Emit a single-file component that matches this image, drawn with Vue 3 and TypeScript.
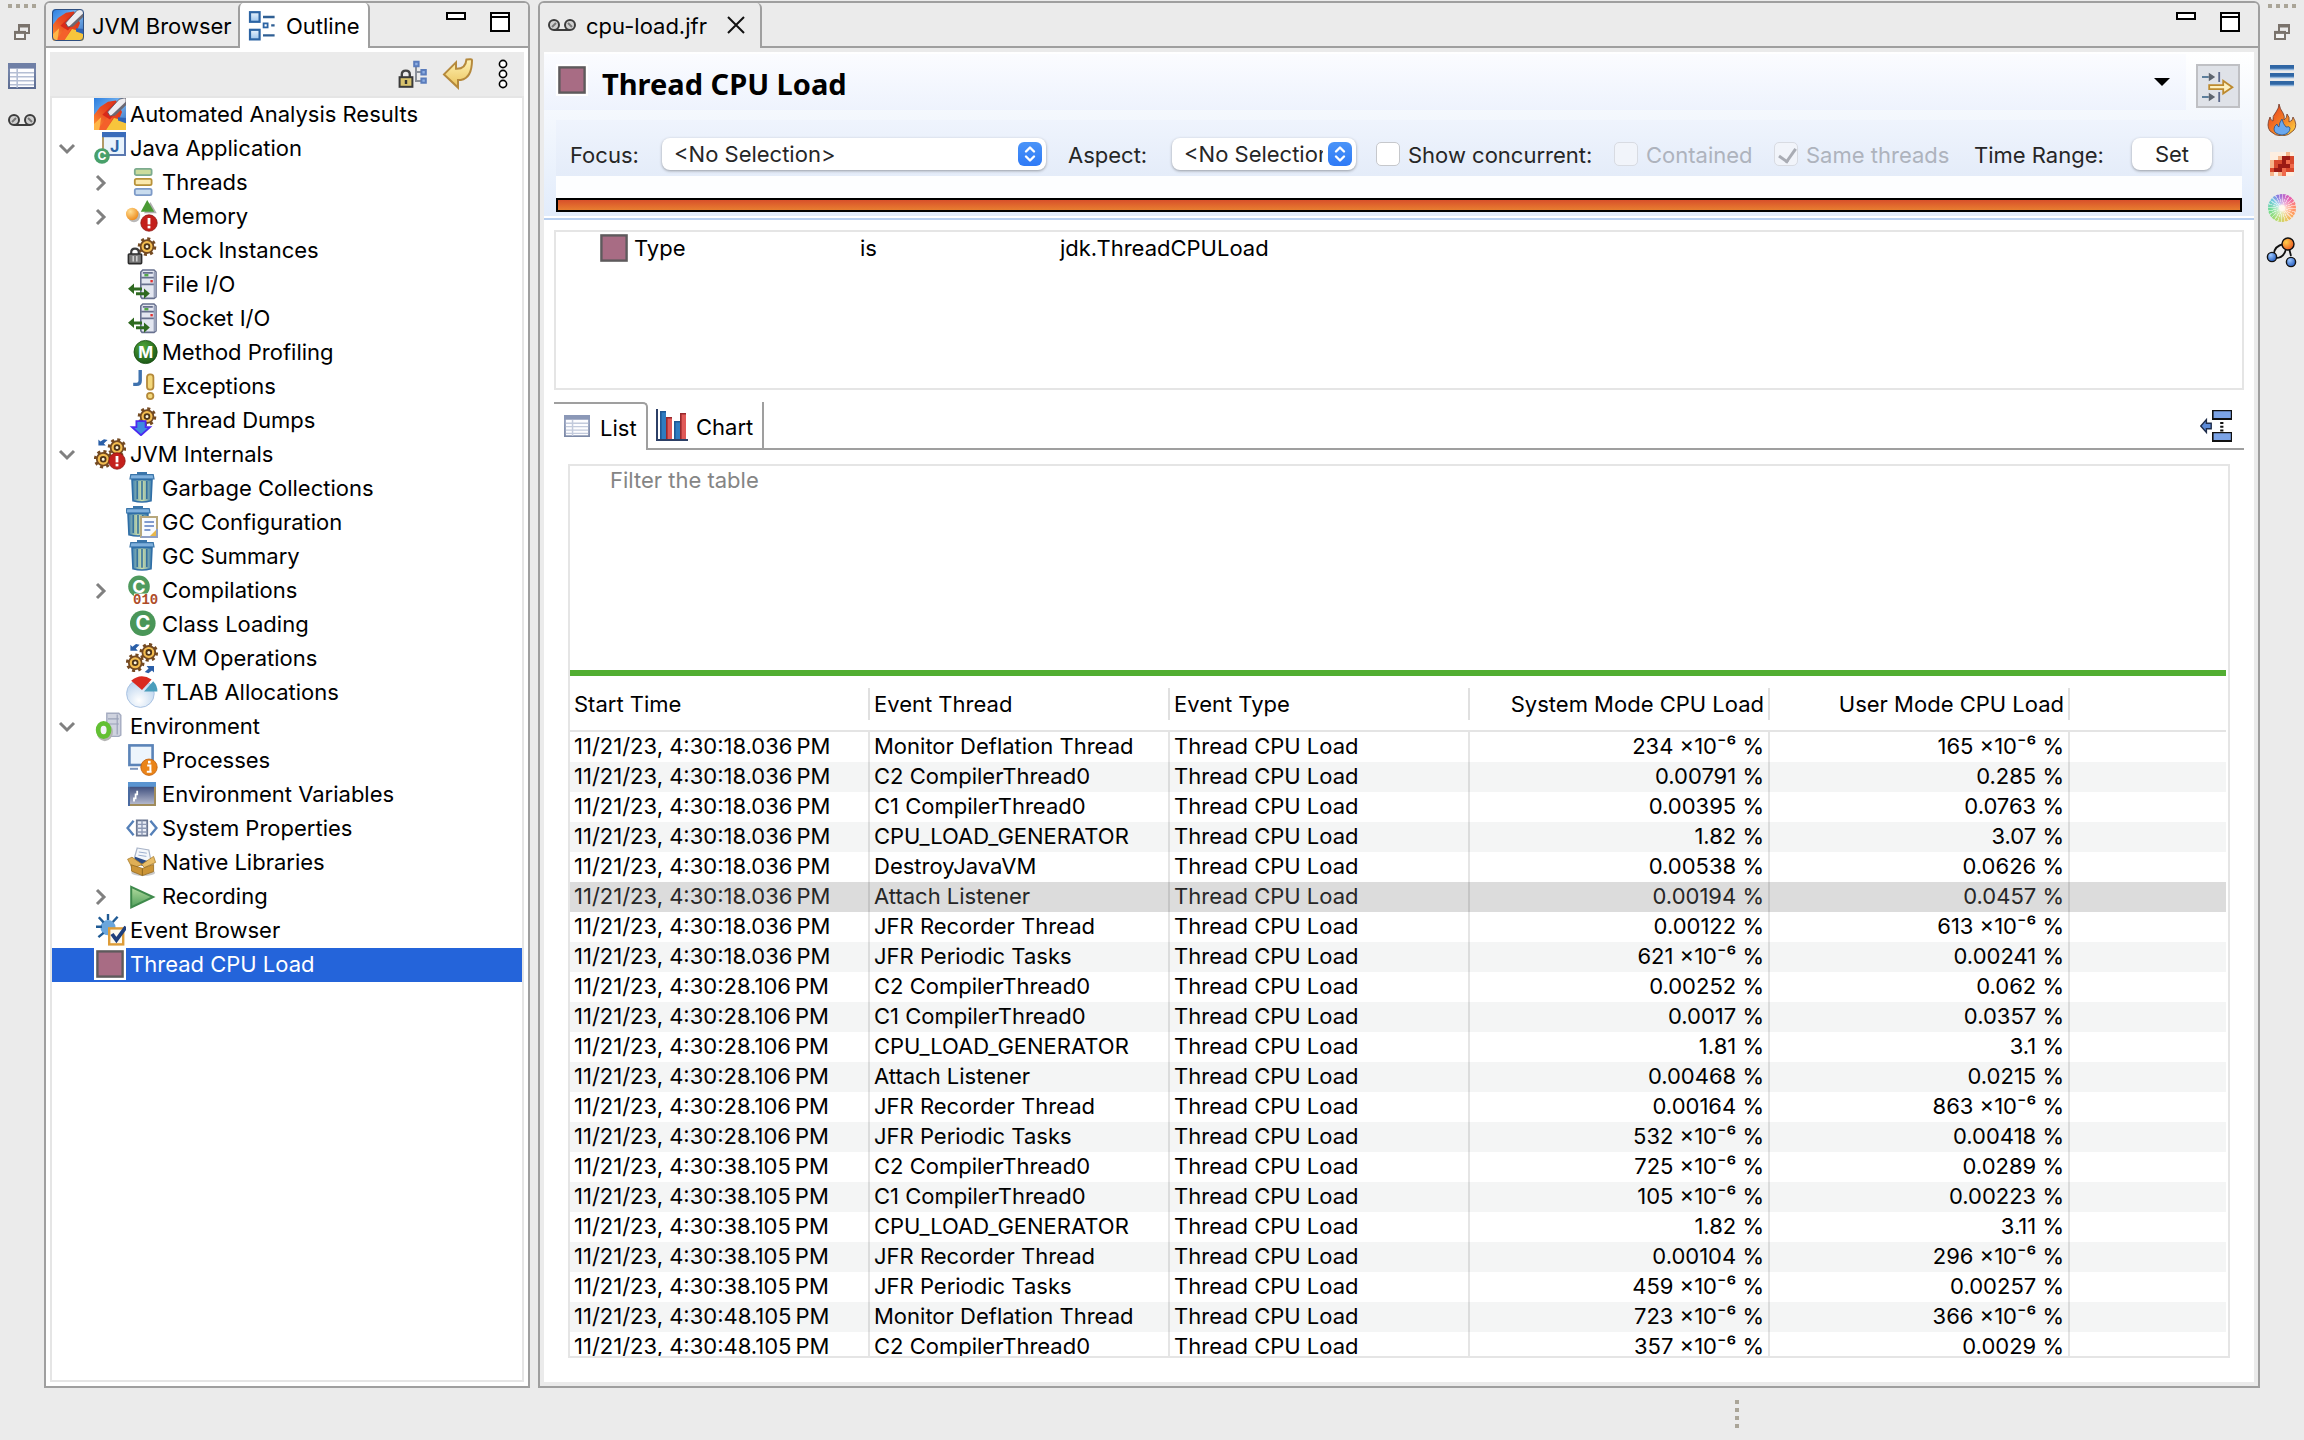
<script setup lang="ts">
import { ref } from 'vue'

interface TreeNode {
  label: string
  icon: string
  level: 0 | 1
  state?: 'open' | 'closed'
}

interface EventRow {
  time: string
  thread: string
  system: string
  user: string
}

const nodes: TreeNode[] = [
  { label: 'Automated Analysis Results', icon: 'rocket', level: 0 },
  { label: 'Java Application', icon: 'java-app', level: 0, state: 'open' },
  { label: 'Threads', icon: 'threads', level: 1, state: 'closed' },
  { label: 'Memory', icon: 'memory', level: 1, state: 'closed' },
  { label: 'Lock Instances', icon: 'lock', level: 1 },
  { label: 'File I/O', icon: 'io', level: 1 },
  { label: 'Socket I/O', icon: 'io', level: 1 },
  { label: 'Method Profiling', icon: 'method', level: 1 },
  { label: 'Exceptions', icon: 'exceptions', level: 1 },
  { label: 'Thread Dumps', icon: 'dumps', level: 1 },
  { label: 'JVM Internals', icon: 'jvm', level: 0, state: 'open' },
  { label: 'Garbage Collections', icon: 'trash', level: 1 },
  { label: 'GC Configuration', icon: 'trash-doc', level: 1 },
  { label: 'GC Summary', icon: 'trash', level: 1 },
  { label: 'Compilations', icon: 'compilations', level: 1, state: 'closed' },
  { label: 'Class Loading', icon: 'class', level: 1 },
  { label: 'VM Operations', icon: 'vm-ops', level: 1 },
  { label: 'TLAB Allocations', icon: 'pie', level: 1 },
  { label: 'Environment', icon: 'environment', level: 0, state: 'open' },
  { label: 'Processes', icon: 'processes', level: 1 },
  { label: 'Environment Variables', icon: 'console', level: 1 },
  { label: 'System Properties', icon: 'properties', level: 1 },
  { label: 'Native Libraries', icon: 'box', level: 1 },
  { label: 'Recording', icon: 'play', level: 1, state: 'closed' },
  { label: 'Event Browser', icon: 'event-browser', level: 0 },
  { label: 'Thread CPU Load', icon: 'event-type', level: 0 },
]

const selectedNode = ref(25)
const selectedRow = ref(5)

const t1 = '11/21/23, 4:30:18.036\u202fPM'
const t2 = '11/21/23, 4:30:28.106\u202fPM'
const t3 = '11/21/23, 4:30:38.105\u202fPM'
const t4 = '11/21/23, 4:30:48.105\u202fPM'

function row(time: string, thread: string, system: string, user: string): EventRow {
  return { time, thread, system, user }
}

const rows: EventRow[] = [
  row(t1, 'Monitor Deflation Thread', '234 ×10⁻⁶ %', '165 ×10⁻⁶ %'),
  row(t1, 'C2 CompilerThread0', '0.00791 %', '0.285 %'),
  row(t1, 'C1 CompilerThread0', '0.00395 %', '0.0763 %'),
  row(t1, 'CPU_LOAD_GENERATOR', '1.82 %', '3.07 %'),
  row(t1, 'DestroyJavaVM', '0.00538 %', '0.0626 %'),
  row(t1, 'Attach Listener', '0.00194 %', '0.0457 %'),
  row(t1, 'JFR Recorder Thread', '0.00122 %', '613 ×10⁻⁶ %'),
  row(t1, 'JFR Periodic Tasks', '621 ×10⁻⁶ %', '0.00241 %'),
  row(t2, 'C2 CompilerThread0', '0.00252 %', '0.062 %'),
  row(t2, 'C1 CompilerThread0', '0.0017 %', '0.0357 %'),
  row(t2, 'CPU_LOAD_GENERATOR', '1.81 %', '3.1 %'),
  row(t2, 'Attach Listener', '0.00468 %', '0.0215 %'),
  row(t2, 'JFR Recorder Thread', '0.00164 %', '863 ×10⁻⁶ %'),
  row(t2, 'JFR Periodic Tasks', '532 ×10⁻⁶ %', '0.00418 %'),
  row(t3, 'C2 CompilerThread0', '725 ×10⁻⁶ %', '0.0289 %'),
  row(t3, 'C1 CompilerThread0', '105 ×10⁻⁶ %', '0.00223 %'),
  row(t3, 'CPU_LOAD_GENERATOR', '1.82 %', '3.11 %'),
  row(t3, 'JFR Recorder Thread', '0.00104 %', '296 ×10⁻⁶ %'),
  row(t3, 'JFR Periodic Tasks', '459 ×10⁻⁶ %', '0.00257 %'),
  row(t4, 'Monitor Deflation Thread', '723 ×10⁻⁶ %', '366 ×10⁻⁶ %'),
  row(t4, 'C2 CompilerThread0', '357 ×10⁻⁶ %', '0.0029 %'),
]
</script>

<template>
  <div class="workbench">
    <svg class="defs" aria-hidden="true">
      <defs>
        <linearGradient id="g-sky" x1="0" y1="0" x2="1" y2="1"><stop offset="0" stop-color="#2a7de0" /><stop offset="0.5" stop-color="#7db8f0" /><stop offset="1" stop-color="#2a63b8" /></linearGradient>
        <linearGradient id="g-fire" x1="1" y1="0" x2="0" y2="1"><stop offset="0" stop-color="#d42c18" /><stop offset="0.5" stop-color="#ea4a22" /><stop offset="1" stop-color="#ff9a34" /></linearGradient>
        <linearGradient id="g-steel" x1="0" y1="0" x2="0" y2="1"><stop offset="0" stop-color="#8190b4" /><stop offset="1" stop-color="#5c6c92" /></linearGradient>
        <linearGradient id="g-blue" x1="0" y1="0" x2="0" y2="1"><stop offset="0" stop-color="#e8f2fc" /><stop offset="1" stop-color="#9cc4ec" /></linearGradient>
        <linearGradient id="g-dark" x1="0" y1="0" x2="0" y2="1"><stop offset="0" stop-color="#26396e" /><stop offset="1" stop-color="#b9bdd0" /></linearGradient>
        <linearGradient id="g-trash" x1="0" y1="0" x2="1" y2="0"><stop offset="0" stop-color="#3c7fb4" /><stop offset="0.5" stop-color="#cfe0a8" /><stop offset="1" stop-color="#3c7fb4" /></linearGradient>
        <linearGradient id="g-play" x1="0" y1="0" x2="0" y2="1"><stop offset="0" stop-color="#b4dca0" /><stop offset="1" stop-color="#4f9f5a" /></linearGradient>
        <linearGradient id="g-gold" x1="0" y1="0" x2="0" y2="1"><stop offset="0" stop-color="#fff2b4" /><stop offset="1" stop-color="#eac35c" /></linearGradient>
        <linearGradient id="g-flame" x1="0" y1="0" x2="1" y2="1"><stop offset="0" stop-color="#e8321c" /><stop offset="0.6" stop-color="#f58a28" /><stop offset="1" stop-color="#ffe04a" /></linearGradient>
        <radialGradient id="g-orange" cx="0.35" cy="0.3" r="0.8"><stop offset="0" stop-color="#ffdf94" /><stop offset="1" stop-color="#ec8412" /></radialGradient>
        <radialGradient id="g-ball" cx="0.35" cy="0.3" r="0.8"><stop offset="0" stop-color="#9cc8ff" /><stop offset="1" stop-color="#1a52b8" /></radialGradient>
        <radialGradient id="g-hot" cx="0.35" cy="0.35" r="0.8"><stop offset="0" stop-color="#ffd04a" /><stop offset="1" stop-color="#e8461c" /></radialGradient>
        <radialGradient id="g-method" cx="0.4" cy="0.3" r="0.8"><stop offset="0" stop-color="#4fa83a" /><stop offset="1" stop-color="#174f12" /></radialGradient>
        <radialGradient id="g-glass" cx="0.45" cy="0.75" r="0.7"><stop offset="0" stop-color="#ffffff" /><stop offset="1" stop-color="#bcd4ee" /></radialGradient>

        <g id="gear">
          <circle r="3.9" fill="none" stroke="#744a22" stroke-width="1.5" stroke-dasharray="1.5 1.56" />
          <circle r="3.2" fill="#f3bd50" stroke="#744a22" stroke-width="0.9" />
          <circle r="1.2" fill="#fff6dc" stroke="#4e3418" stroke-width="0.9" />
        </g>
        <g id="alert">
          <circle cx="11.5" cy="11.5" r="4.1" fill="#c4201c" stroke="#8e1612" stroke-width="0.4" />
          <rect x="10.8" y="9" width="1.4" height="3.2" fill="#fff" />
          <rect x="10.8" y="12.9" width="1.4" height="1.3" fill="#fff" />
        </g>
        <g id="can">
          <rect x="5.5" y="0" width="5" height="1.4" fill="#3b76aa" />
          <path d="M2.4 1.3h11.2l.4 2.2H2z" fill="#7fb0dc" stroke="#3b76aa" stroke-width="0.6" />
          <path d="M3 3.8h10l-.5 10.6q-4.5 1.2-9 0z" fill="url(#g-trash)" stroke="#2f6ea6" stroke-width="0.8" />
          <path d="M5.6 4.5v9M8 4.5v9.4M10.4 4.5v9" stroke="#34719f" stroke-width="0.8" />
        </g>
      </defs>

      <symbol id="rocket" viewBox="0 0 16 16">
        <rect width="16" height="16" fill="url(#g-sky)" />
        <path d="M0 16V8.500L3 4.500l4-2.600L11 1.200l3 5.800-3.500 9z" fill="url(#g-fire)" />
        <path d="M6 16l4-6 2.400.6 3.600 2V16z" fill="#f7c53c" />
        <path d="M12 9.600l4 .4v2.600l-4-1.400z" fill="#2f62b4" />
        <path d="M1.600 16l5.800-7.400L9.400 10 6 16z" fill="#f4602a" />
        <path d="M0 13l3.600-3.400L2.600 16H0z" fill="#ffb648" />
        <path d="M4.200 8.400L10 2.600l3 2L8 10.800z" fill="#d92a1a" />
        <path d="M8 9L6.800 7 12.600.6 15 0h1v3l-5.600 5.400z" fill="#ececf0" stroke="#55525c" stroke-width="0.4" />
        <path d="M8.600 8.800L16 1.800v1.800L10.600 8.800z" fill="#6c6973" />
      </symbol>
      <symbol id="threads" viewBox="0 0 16 16">
        <rect x="4.400" y="1.400" width="8.400" height="3.200" rx="0.8" fill="#cbdc9c" stroke="#7cab8e" stroke-width="0.9" />
        <rect x="4.400" y="6.400" width="8.400" height="3.200" rx="0.8" fill="#fbe9ae" stroke="#b8923a" stroke-width="0.9" />
        <rect x="4.400" y="11.400" width="8.400" height="3.200" rx="0.8" fill="#c9dcee" stroke="#7d9ac8" stroke-width="0.9" />
      </symbol>
      <symbol id="memory" viewBox="0 0 16 16">
        <circle cx="4" cy="8" r="3.1" fill="#b9b9b9" />
        <path d="M9 6.6L12.2 1l3.2 5.6z" fill="#b0b0b0" />
        <circle cx="3.1" cy="7" r="3.1" fill="url(#g-orange)" />
        <path d="M7.4 5.9L10.6 0l3.5 5.9z" fill="#4a9a34" />
        <use href="#alert" />
      </symbol>
      <symbol id="lock" viewBox="0 0 16 16">
        <use href="#gear" x="10.5" y="6.3" />
        <path d="M2.6 10.4V9.2q0-1.9 1.9-1.9t1.9 1.9v1.2" fill="none" stroke="#3c3c3c" stroke-width="1.1" />
        <rect x="1.2" y="10" width="6.6" height="4.8" rx="0.4" fill="#7d7d7d" stroke="#2c2c2c" stroke-width="0.8" />
        <path d="M3.6 11v2.8M5.4 11v2.8" stroke="#d8d8d8" stroke-width="0.7" />
      </symbol>
      <symbol id="io" viewBox="0 0 16 16">
        <path d="M8.4 1h5.6l1 1v12.4l-1 .8H8l-.6-.8V2z" fill="#e3e6f0" stroke="#67708e" stroke-width="0.8" />
        <path d="M8.4 2.4h5M7.6 4.8h7M7.6 8.2h7" stroke="#67708e" stroke-width="0.9" />
        <path d="M14.4 2v12.6" stroke="#9aa2ba" stroke-width="1.2" />
        <rect x="9.2" y="3" width="2" height="1.2" fill="#54a848" />
        <rect x="12.2" y="6" width="1.2" height="1.2" fill="#e03030" />
        <path d="M1 10.4l3-2.6v1.9h4v1.5H4V13z" fill="#2f6a20" />
        <path d="M11.9 12.8L9 10.2v1.9H5v1.5h4v1.8z" fill="#2f6a20" />
      </symbol>
      <symbol id="exceptions" viewBox="0 0 16 16">
        <path d="M7.1 0v5.4q0 1.8-1.8 1.8H3.6" fill="none" stroke="#3f72ae" stroke-width="1.7" />
        <rect x="10.5" y="2.2" width="3.2" height="7.6" rx="1.4" fill="#f3d77a" stroke="#b4893a" stroke-width="0.9" />
        <circle cx="12.1" cy="13" r="1.6" fill="#f3d77a" stroke="#b4893a" stroke-width="0.9" />
      </symbol>
      <symbol id="dumps" viewBox="0 0 16 16">
        <use href="#gear" x="10.5" y="6.3" />
        <path d="M5.2 8.6h4.6v3H12l-4.5 4-4.5-4h2.2z" fill="#3e8ae0" stroke="#4a2af0" stroke-width="0.9" />
      </symbol>
      <symbol id="jvm" viewBox="0 0 16 16">
        <path d="M6.8 1L4.9 2.8l1 1H2.2V.8l1 1L5 .6z" fill="#2a5fa8" />
        <use href="#gear" x="11.5" y="4.8" />
        <use href="#gear" x="4.6" y="10.6" />
        <use href="#alert" />
      </symbol>
      <symbol id="trash" viewBox="0 0 16 16"><use href="#can" /></symbol>
      <symbol id="trash-doc" viewBox="0 0 16 16">
        <use href="#can" x="-2" />
        <path d="M7.5 5.5h8v10h-8z" fill="#f8fbff" stroke="#b7a77c" />
        <path d="M7.5 15.5h8v-4" fill="none" stroke="#8f9fc4" />
        <path d="M9.2 8h4.8M9.2 10h4.8M9.2 12h3" stroke="#5a7cc0" stroke-width="0.8" />
        <path d="M15 12v3h-3z" fill="#e8b64a" />
      </symbol>
      <symbol id="vm-ops" viewBox="0 0 16 16">
        <path d="M6.8 1.4L4.9 3.2l1 1.2H2.2v-3l1 1L5 1z" fill="#2a5fa8" />
        <use href="#gear" x="11.4" y="5.2" />
        <use href="#gear" x="4.6" y="10.4" />
        <path d="M9.4 15l1.9-1.8-1-1.2H14v3.2l-1-1-1.8 1.4z" fill="#2a5fa8" />
      </symbol>
      <symbol id="pie" viewBox="0 0 16 16">
        <circle cx="7.2" cy="8.8" r="6.9" fill="url(#g-glass)" stroke="#a9c2e2" stroke-width="0.5" />
        <path d="M8 7L2.6 2.4Q7.4-1.8 12.8 1.8z" fill="#d92a20" />
        <path d="M9 7.8l4.6-5.2q2.2 2.2 2.1 5.2z" fill="#4a9ebc" />
      </symbol>
      <symbol id="environment" viewBox="0 0 16 16">
        <path d="M6.4 1.6h6l1 1v10l-1 .6h-6z" fill="#cfd3df" stroke="#a4abc0" stroke-width="0.7" />
        <path d="M7 4.4h5.4M7 7h5.4M11.6 2.2v10" stroke="#9aa2b8" stroke-width="0.6" />
        <ellipse cx="5.4" cy="11" rx="2.9" ry="3.4" fill="none" stroke="#b4b4b4" stroke-width="2.4" />
        <ellipse cx="4.8" cy="10" rx="2.7" ry="3.3" fill="#f4f4fa" stroke="#63c034" stroke-width="2.4" />
      </symbol>
      <symbol id="processes" viewBox="0 0 16 16">
        <rect x="1.7" y="0.7" width="11.6" height="9.8" fill="#edf5fc" stroke="#5b84b8" stroke-width="1.3" />
        <path d="M2 12.4h4" stroke="#7d96bc" stroke-width="1" />
        <circle cx="11.5" cy="11.6" r="4.1" fill="#ea8418" stroke="#c0600c" stroke-width="0.4" />
        <path d="M10.6 10.8h1.6v3M10.4 13.9h2.4" fill="none" stroke="#fff" stroke-width="1" />
        <rect x="11" y="8.4" width="1.3" height="1.3" fill="#fff" />
      </symbol>
      <symbol id="console" viewBox="0 0 16 16">
        <rect x="1.5" y="2.5" width="13" height="11" fill="url(#g-dark)" stroke="#a08c5c" />
        <path d="M1.5 14V4" stroke="#4a6aa0" />
        <rect x="1" y="2" width="14" height="2.4" fill="#5a94d0" />
        <path d="M5.6 6.4v1.8H4.8v2H4v1.6" fill="none" stroke="#fff" stroke-width="0.9" />
      </symbol>
      <symbol id="properties" viewBox="0 0 16 16">
        <path d="M3.8 4.4L.8 8l3 3.6M12.2 4.4l3 3.6-3 3.6" fill="none" stroke="#5580b8" stroke-width="1.2" />
        <rect x="5.4" y="4.2" width="5.2" height="7.6" fill="#e9edf6" stroke="#6a7690" stroke-width="0.9" />
        <path d="M5.4 6.2h5.2M5.4 8.1h5.2M5.4 10h5.2M8 4.2v7.6" stroke="#8d99b4" stroke-width="0.7" />
      </symbol>
      <symbol id="box" viewBox="0 0 16 16">
        <ellipse cx="8.6" cy="13.4" rx="6" ry="1.6" fill="#c9c9c9" />
        <path d="M5.6 1l5.8 1 1.2 6-8.800-.6z" fill="#f4f7fb" stroke="#a9b4c8" stroke-width="0.6" />
        <path d="M6.400 3l4 .6M6.200 4.600l4 .6" stroke="#9db0d0" stroke-width="0.5" />
        <path d="M4.600 5.400l6.800 2.400L8.200 10 4 8z" fill="#2c4c86" />
        <path d="M.8 6.600L3 5.600l5.200 3.600-5 2z" fill="#dfaf56" stroke="#a87c2c" stroke-width="0.4" />
        <path d="M13.800 5.200l1 3-5.600 2.600-1.400-1.600z" fill="#e8bd68" stroke="#a87c2c" stroke-width="0.4" />
        <path d="M2.600 9.400l5.600 1.800v3.600l-5.400-2.200zM8.200 11.200l5.600-2v3.600l-5.600 2z" fill="#cb9436" stroke="#94691f" stroke-width="0.4" />
      </symbol>
      <symbol id="play" viewBox="0 0 16 16">
        <path d="M2.6 3.4L13.6 8.5 2.6 13.7z" fill="url(#g-play)" stroke="#3f8a4c" />
      </symbol>
      <symbol id="event-browser" viewBox="0 0 16 16">
        <circle cx="7" cy="6.8" r="3.8" fill="#6aa6dc" />
        <path d="M7 0v3M2.4 1.6l2.4 2.6M11.8 1.4L9.4 4M1 6.4h3M2.2 11.6l2.6-2.2" stroke="#1f5a94" stroke-width="1.2" />
        <rect x="7.6" y="7.2" width="7" height="8" fill="#fdf9ee" stroke="#dd9c38" stroke-width="1.2" />
        <path d="M9 10l2.2 3L16 6.4" fill="none" stroke="#1f3f7c" stroke-width="1.9" />
      </symbol>
      <symbol id="event-type" viewBox="0 0 16 16">
        <rect width="16" height="16" fill="#fff" />
        <rect x="1.7" y="1.7" width="12.6" height="12.6" fill="#a86c84" stroke="#5e5a5c" stroke-width="1.2" />
      </symbol>
      <symbol id="outline-view" viewBox="0 0 16 16">
        <rect x="2" y="1.6" width="4.8" height="4.8" fill="url(#g-blue)" stroke="#2c64a4" stroke-width="1.1" />
        <rect x="2" y="10.4" width="4.8" height="4.8" fill="url(#g-blue)" stroke="#2c64a4" stroke-width="1.1" />
        <rect x="8.8" y="7.2" width="2" height="2" fill="#fff" stroke="#2c64a4" stroke-width="0.9" />
        <path d="M8.5 4h5.8M12.6 8.2h1.7M8.5 13.2h5.8" stroke="#2f5f94" stroke-width="1.2" />
      </symbol>
      <symbol id="table-view" viewBox="0 0 14 13">
        <rect x="0.5" y="0.5" width="13" height="12" fill="#fdfdff" stroke="url(#g-steel)" />
        <rect width="14" height="2.8" fill="#6f7fa6" />
        <path d="M1 4.9h12M1 6.9h12M1 8.9h12M1 10.9h12M4.6 3v9.4" stroke="#b4bed4" stroke-width="0.8" />
      </symbol>
      <symbol id="tape" viewBox="0 0 28 12">
        <circle cx="6" cy="6" r="5" fill="#d0d0d0" stroke="#3c3c3c" stroke-width="2" />
        <circle cx="22" cy="6" r="5" fill="#d0d0d0" stroke="#3c3c3c" stroke-width="2" />
        <path d="M6 11h16" stroke="#3c3c3c" stroke-width="2" />
        <path d="M4 8l4-4M20 4l4 4" stroke="#777" stroke-width="2" />
      </symbol>
      <symbol id="restore" viewBox="0 0 16 16">
        <path d="M5 7V1h10v8h-4" fill="none" stroke="#7a736c" stroke-width="2" />
        <path d="M4 2h12" stroke="#7a736c" stroke-width="3" />
        <rect x="1" y="8" width="10" height="7" fill="#f4f4f4" stroke="#7a736c" stroke-width="2" />
        <path d="M0 8.4h12" stroke="#7a736c" stroke-width="3" />
      </symbol>
      <symbol id="minimize" viewBox="0 0 20 20"><rect x="1" y="1" width="18" height="6" fill="#fff" stroke="#000" stroke-width="2" /></symbol>
      <symbol id="maximize" viewBox="0 0 20 20">
        <rect x="1" y="1" width="18" height="18" fill="#fff" stroke="#000" stroke-width="2" />
        <path d="M0 5h20" stroke="#000" stroke-width="2" />
      </symbol>
    </svg>

    <aside class="trim">
      <span class="grip"></span>
      <button class="trim-btn" aria-label="Restore"><svg class="i16"><use href="#restore" /></svg></button>
      <button class="trim-btn" aria-label="Table view"><svg class="i28"><use href="#table-view" /></svg></button>
      <button class="trim-btn" aria-label="Recordings"><svg class="i28"><use href="#tape" /></svg></button>
    </aside>

    <section class="panel outline">
      <div class="strip">
        <button class="tab browser-tab"><svg class="icon rounded"><use href="#rocket" /></svg><span>JVM Browser</span></button>
        <button class="tab outline-tab"><svg class="icon"><use href="#outline-view" /></svg><span>Outline</span></button>
        <div class="strip-rest">
          <button class="win" aria-label="Minimize"><svg class="i20"><use href="#minimize" /></svg></button>
          <button class="win" aria-label="Maximize"><svg class="i20"><use href="#maximize" /></svg></button>
        </div>
      </div>
      <div class="outline-body">
        <div class="toolbar">
          <button class="tool" aria-label="Lock tree">
            <svg class="icon" viewBox="0 0 16 16">
              <path d="M9.5 2v9.5h4M9.5 7h4" fill="none" stroke="#8a8f98" />
              <path d="M8.6 1.9h2.2v2.2H8.6zM12.2 6h2.2v2.2h-2.2zM12.2 10.2h2.2v2.2h-2.2z" fill="#8fb0e4" stroke="#5a7cbc" />
              <path d="M2.4 10V8.2q0-1.9 2-1.9t2 1.9V10" fill="none" stroke="#444" stroke-width="1.2" />
              <rect x="1.3" y="9.6" width="6.4" height="4.8" fill="#d8c26c" stroke="#3a3a3a" />
              <path d="M4.5 11v2" stroke="#333" stroke-width="1.2" />
            </svg>
          </button>
          <button class="tool" aria-label="Back">
            <svg class="icon" viewBox="0 0 16 16"><path d="M1 8.2l6-6v3.2q4.8.2 5.2-4.6 2.8-.4 2.8.2 0 9-5.6 10L8 11v3.8z" fill="url(#g-gold)" stroke="#b5893c" /></svg>
          </button>
          <button class="tool" aria-label="View menu">
            <svg class="icon" viewBox="0 0 32 32" fill="#fff" stroke="#000" stroke-width="1.6"><circle cx="16" cy="6" r="3.6" /><circle cx="16" cy="16" r="3.6" /><circle cx="16" cy="26" r="3.6" /></svg>
          </button>
        </div>
        <ul class="tree" role="tree">
          <li
            v-for="(node, i) in nodes"
            :key="i"
            role="treeitem"
            class="node"
            :class="{ child: node.level === 1, selected: i === selectedNode }"
            :aria-selected="i === selectedNode"
            @click="selectedNode = i"
          >
            <span class="twisty">
              <svg v-if="node.state" viewBox="0 0 24 24" fill="none" stroke="#808080" stroke-width="3">
                <path v-if="node.state === 'open'" d="M5 8l7 7 7-7" />
                <path v-else d="M10 5l7 7-7 7" />
              </svg>
            </span>
            <svg v-if="node.icon === 'java-app'" class="icon" viewBox="0 0 16 16">
              <rect x="4.500" y="0.5" width="11" height="11" fill="#e9f3fc" stroke="#b09a68" />
              <path d="M15.500 2v9.500H5" fill="none" stroke="#5a78b0" />
              <rect x="4" y="0" width="12" height="2.600" fill="#3a6cba" />
              <text x="8" y="9.800" class="glyph" font-size="8" fill="#2f66a6">J</text>
              <circle cx="4" cy="12" r="3.900" fill="#48a06a" />
              <text x="4" y="14.200" class="glyph mid" font-size="6" fill="#fff">C</text>
            </svg>
            <svg v-else-if="node.icon === 'method'" class="icon" viewBox="0 0 16 16">
              <circle cx="9.800" cy="8" r="5.800" fill="url(#g-method)" stroke="#174f12" stroke-width="0.4" />
              <text x="9.800" y="10.800" class="glyph mid" font-size="8" fill="#fff">M</text>
            </svg>
            <svg v-else-if="node.icon === 'compilations'" class="icon" viewBox="0 0 16 16">
              <circle cx="6.500" cy="6.200" r="5.400" fill="#4f9a5e" />
              <text x="6.500" y="9.400" class="glyph mid" font-size="9" fill="#fff">C</text>
              <rect x="4" y="9.800" width="12" height="5.600" fill="#fff" />
              <text x="9.800" y="15" class="mono mid" font-size="7" fill="#ae4c28">010</text>
            </svg>
            <svg v-else-if="node.icon === 'class'" class="icon" viewBox="0 0 16 16">
              <circle cx="8.400" cy="7.600" r="6.400" fill="#4a9658" />
              <text x="8.400" y="11.200" class="glyph mid" font-size="10" fill="#fff">C</text>
            </svg>
            <svg v-else class="icon"><use :href="'#' + node.icon" /></svg>
            <span class="node-label">{{ node.label }}</span>
          </li>
        </ul>
      </div>
    </section>

    <main class="panel editor">
      <div class="strip">
        <button class="tab editor-tab">
          <svg class="tape"><use href="#tape" /></svg><span>cpu-load.jfr</span>
          <svg class="close" viewBox="0 0 18 18"><path d="M1 1l16 16M17 1L1 17" stroke="#111" stroke-width="2" /></svg>
        </button>
        <div class="strip-rest">
          <button class="win" aria-label="Minimize"><svg class="i20"><use href="#minimize" /></svg></button>
          <button class="win" aria-label="Maximize"><svg class="i20"><use href="#maximize" /></svg></button>
        </div>
      </div>

      <div class="page">
        <header class="form-head">
          <div class="title-row">
            <div class="title">
              <svg class="icon"><use href="#event-type" /></svg>
              <h1>Thread CPU Load</h1>
              <button class="menu-btn" aria-label="Page menu"><svg viewBox="0 0 16 8"><path d="M0 0h16L8 8z" /></svg></button>
            </div>
            <button class="layout-btn" aria-label="Layout">
              <svg class="icon" viewBox="0 0 16 16">
                <path d="M0 3.5h3.4M0 13.5h3.4" stroke="#5d7f9c" stroke-width="0.9" />
                <path d="M3.4 1.4L6.6 3.5 3.4 5.6zM3.4 11.4l3.2 2.1-3.2 2.1z" fill="#5d646e" />
                <path d="M8.6 1v5M8.6 11v5" stroke="#5d6a8c" stroke-width="0.9" />
                <path d="M3.6 7.6h7V5.4l4.6 3.2-4.6 3.2V9.6h-7z" fill="#fdf0c0" stroke="#bd8a2e" stroke-width="0.9" />
              </svg>
            </button>
          </div>
          <div class="controls">
            <label for="focus" class="caption focus-label">Focus:</label>
            <span class="picker focus">
              <select id="focus"><option>&lt;No Selection&gt;</option></select>
              <svg viewBox="0 0 24 24"><path d="M8 9.500l4-4 4 4M8 14.500l4 4 4-4" /></svg>
            </span>
            <label for="aspect" class="caption aspect-label">Aspect:</label>
            <span class="picker aspect">
              <select id="aspect"><option>&lt;No Selection&gt;</option></select>
              <svg viewBox="0 0 24 24"><path d="M8 9.500l4-4 4 4M8 14.500l4 4 4-4" /></svg>
            </span>
            <label class="check concurrent"><input type="checkbox" /><span class="caption">Show concurrent:</span></label>
            <label class="check contained off"><input type="checkbox" disabled /><span class="caption">Contained</span></label>
            <label class="check same off"><input type="checkbox" checked disabled /><span class="caption">Same threads</span></label>
            <span class="caption range-label">Time Range:</span>
            <button class="set">Set</button>
          </div>
          <div class="range"><div class="range-bar"></div></div>
        </header>

        <div class="facets">
          <div class="facet">
            <span class="facet-name"><svg class="icon"><use href="#event-type" /></svg>Type</span>
            <span>is</span>
            <span>jdk.ThreadCPULoad</span>
          </div>
        </div>

        <div class="views">
          <button class="view-tab list-tab"><svg class="list-icon" viewBox="0 0 14 13" preserveAspectRatio="none"><use href="#table-view" width="14" height="13" /></svg><span>List</span></button>
          <button class="view-tab chart-tab">
            <svg class="icon" viewBox="0 0 16 16">
              <path d="M.5 0v15.500H16" fill="none" stroke="#2c3f66" />
              <rect x="2" y="1" width="3" height="14" fill="#2f7cc0" />
              <rect x="5" y="4" width="3" height="11" fill="#e05a58" />
              <rect x="9" y="6" width="3" height="9" fill="#2f7cc0" />
              <rect x="12" y="2" width="3" height="13" fill="#e05a58" />
              <path d="M2.400 15V1.400H5M9.400 15V6.400H12" fill="none" stroke="#1f5894" stroke-width="0.8" />
              <path d="M5.400 15V4.400H8M12.400 15V2.400H15" fill="none" stroke="#98282c" stroke-width="0.8" />
            </svg><span>Chart</span>
          </button>
          <div class="views-rest">
            <button class="win" aria-label="Show column layout">
              <svg class="icon" viewBox="0 0 16 16">
                <path d="M6 0h10v5H6zM6 11h10v5H6z" fill="#111" />
                <path d="M6.800.6H15.400V4H6.800zM6.800 11.600H15.400V15H6.800z" fill="#7ba3e6" />
                <path d="M10.900 6v4.800" stroke="#111" stroke-width="1.600" stroke-dasharray="1 0.900" />
                <path d="M.4 8l2.800-3.200v1.800h2.400v2.800H3.200v1.800z" fill="#5b8ad8" stroke="#1e2c4a" stroke-width="0.7" />
              </svg>
            </button>
          </div>
        </div>

        <div class="grid">
          <textarea class="filter" placeholder="Filter the table" aria-label="Filter the table"></textarea>
          <div class="rule"></div>
          <div class="table-clip">
            <table>
              <colgroup><col class="c" /><col class="c" /><col class="c" /><col class="c" /><col class="c" /><col /></colgroup>
              <thead>
                <tr>
                  <th>Start Time</th>
                  <th>Event Thread</th>
                  <th>Event Type</th>
                  <th class="num">System Mode CPU Load</th>
                  <th class="num">User Mode CPU Load</th>
                  <th class="fill"></th>
                </tr>
              </thead>
              <tbody>
                <tr v-for="(r, i) in rows" :key="i" :class="{ picked: i === selectedRow }" @click="selectedRow = i">
                  <td>{{ r.time }}</td>
                  <td>{{ r.thread }}</td>
                  <td>Thread CPU Load</td>
                  <td class="num">{{ r.system }}</td>
                  <td class="num">{{ r.user }}</td>
                  <td class="fill"></td>
                </tr>
              </tbody>
            </table>
          </div>
        </div>
      </div>
    </main>

    <aside class="trim">
      <span class="grip"></span>
      <button class="trim-btn" aria-label="Restore"><svg class="i16"><use href="#restore" /></svg></button>
      <button class="trim-btn" aria-label="Stack trace">
        <svg class="icon" viewBox="0 0 32 32"><path d="M4 7h24M4 15h24M4 23h24" stroke="#2f66a4" stroke-width="4" /><path d="M4 9.500h24M4 17.500h24M4 25.500h24" stroke="#8fb4da" stroke-width="1.500" /></svg>
      </button>
      <button class="trim-btn" aria-label="Flame view">
        <svg class="icon" viewBox="0 0 32 32">
          <path d="M13 0q1 5 4 9 2 3 1 7 3-2 3-6 3 3 2 8 4-1 4-5 5 8 1 13-5 6-12 6T4 27Q0 22 4 13q1 4 3 4-1-5 3-9 3-4 3-8z" fill="url(#g-flame)" stroke="#6e3a2a" stroke-width="0.8" />
          <path d="M16 15q1 5 4 8 4-1 4 1 0 6-8 7-8-1-8-6 0-3 3-5 0 2 2 3 0-4 3-8z" fill="#6aa8ee" stroke="#24508c" stroke-width="0.8" />
        </svg>
      </button>
      <button class="trim-btn" aria-label="Heat map">
        <svg class="icon" viewBox="0 0 32 32" shape-rendering="crispEdges">
          <rect x="4" y="4" width="24" height="24" fill="#fdeee0" />
          <path d="M4 12h4v8H4zM12 8h4v4h-4zM20 4h4v4h-4zM4 24h4v4H4zM12 24h4v4h-4z" fill="#f6b48a" />
          <path d="M8 12h8v8H8zM20 20h8v4h-8zM4 20h4v4H4zM24 8h4v8h-4z" fill="#d8482c" />
          <path d="M16 8h8v4h-8zM12 16h12v4H12zM8 20h8v4H8zM16 12h4v4h-4z" fill="#9c1a14" />
          <path d="M20 12h4v4h-4zM16 20h4v8h-4zM24 16h4v4h-4z" fill="#ef6a4c" />
        </svg>
      </button>
      <button class="trim-btn" aria-label="Dependency view"><span class="wheel"></span></button>
      <button class="trim-btn" aria-label="Graph view">
        <svg class="icon" viewBox="0 0 32 32">
          <path d="M8 18Q8 10 18 8M10 22Q18 22 20 13M25 20L23 12" fill="none" stroke="#111" stroke-width="1.800" />
          <circle cx="22" cy="8" r="6" fill="url(#g-hot)" stroke="#111" stroke-width="1.400" />
          <circle cx="6" cy="21" r="4.600" fill="url(#g-ball)" stroke="#111" stroke-width="1.400" />
          <circle cx="25" cy="26" r="4.600" fill="url(#g-ball)" stroke="#111" stroke-width="1.400" />
        </svg>
      </button>
    </aside>

    <footer class="status"><span class="grip vertical"></span></footer>
  </div>
</template>

<style>
body {
  background: #ebebeb;
}
</style>

<style scoped>
.workbench {
  box-sizing: border-box;
  height: 100vh;
  display: grid;
  grid-template-columns: 44px 486px minmax(0, 1fr) 44px;
  grid-template-rows: minmax(0, 1fr) 52px;
  padding-top: 1px;
  background: #ebebeb;
  color: #000;
  font: 22px/32px Inter, "Liberation Sans", sans-serif;
  overflow: hidden;
}
.workbench * {
  box-sizing: border-box;
}
.defs {
  position: absolute;
  width: 0;
  height: 0;
}
.glyph {
  font-family: Inter, sans-serif;
  font-weight: 700;
}
.mono {
  font-family: "Liberation Mono", monospace;
  font-weight: 700;
}
.mid {
  text-anchor: middle;
}
button {
  margin: 0;
  padding: 0;
  border: 0;
  background: none;
  color: inherit;
  font: inherit;
}
svg {
  display: block;
  flex: none;
}
.icon {
  width: 32px;
  height: 32px;
}
.rounded {
  border-radius: 4px;
  outline: 1px solid #2f4f80;
  outline-offset: -1px;
}
.i16 { width: 16px; height: 16px; }
.i20 { width: 20px; height: 20px; }
.i28 { width: 28px; height: 28px; }

/* side trims */
.trim {
  display: flex;
  flex-direction: column;
  align-items: center;
  padding-top: 3px;
}
.trim .grip {
  margin-bottom: 2px;
}
.grip {
  width: 28px;
  height: 4px;
  background: repeating-linear-gradient(90deg, #aaa598 0 4px, transparent 4px 8px);
}
.grip.vertical {
  width: 4px;
  height: 28px;
  background: repeating-linear-gradient(#aaa598 0 4px, transparent 4px 8px);
}
.trim-btn {
  display: flex;
  justify-content: center;
  align-items: center;
  width: 32px;
  height: 44px;
}
.wheel {
  width: 28px;
  height: 28px;
  border-radius: 50%;
  background:
    radial-gradient(#fff8ee 0 12%, rgba(255, 255, 255, 0.6) 22%, transparent 60%),
    repeating-conic-gradient(rgba(255, 255, 255, 0.5) 0 5deg, transparent 5deg 15deg),
    conic-gradient(#b06ad0, #e860b0 40deg, #ff8a70 80deg, #ffa060 120deg, #e8c860 160deg, #b8dc70 200deg, #70dc90 260deg, #70c8e0 310deg, #8a7ae0 340deg, #b06ad0);
}

/* panels */
.panel {
  display: flex;
  flex-direction: column;
  min-width: 0;
  border: 2px solid #9f9f9f;
  border-radius: 6px 6px 0 0;
}
.outline {
  background: #fff;
}
.editor {
  margin-left: 8px;
}
.strip {
  display: flex;
  height: 45px;
  flex: none;
  background: #ebebeb;
  border-radius: 4px 4px 0 0;
}
.tab {
  display: flex;
  align-items: center;
  gap: 8px;
  white-space: nowrap;
}
.tab span,
.caption {
  padding-top: 2px;
}
.browser-tab {
  width: 192px;
  padding-left: 6px;
  border-bottom: 2px solid #9f9f9f;
}
.outline-tab {
  width: 132px;
  padding: 0 0 2px 6px;
  background: #fff;
  border: 2px solid #9f9f9f;
  border-width: 0 2px;
  border-radius: 5px 5px 0 0;
}
.strip-rest {
  flex: 1;
  display: flex;
  justify-content: flex-end;
  gap: 24px;
  padding: 9px 18px 0 0;
  border-bottom: 2px solid #9f9f9f;
}
.win {
  height: 20px;
}
.editor-tab {
  width: 222px;
  padding: 0 0 2px 8px;
  gap: 10px;
  border-right: 2px solid #9f9f9f;
  border-radius: 0 5px 0 0;
}
.tape {
  width: 28px;
  height: 12px;
}
.close {
  width: 18px;
  height: 18px;
  margin-left: 10px;
}

/* outline */
.outline-body {
  flex: 1;
  min-height: 0;
  display: flex;
  flex-direction: column;
  padding: 4px;
}
.toolbar {
  height: 44px;
  flex: none;
  display: flex;
  justify-content: flex-end;
  align-items: center;
  gap: 13px;
  padding-right: 5px;
  background: #ebebeb;
}
.tree {
  flex: 1;
  min-height: 0;
  margin: 0;
  padding: 0;
  list-style: none;
  border: 2px solid #e5e5e5;
  overflow: hidden;
}
.node {
  display: flex;
  height: 34px;
  white-space: nowrap;
}
.node.child {
  padding-left: 32px;
}
.node.selected {
  background: #2464da;
  color: #fff;
}
.twisty {
  width: 42px;
  padding: 5px 0 0 3px;
}
.twisty svg {
  width: 24px;
  height: 24px;
}
.node-label {
  padding-left: 4px;
}

/* editor page */
.page {
  flex: 1;
  min-height: 0;
  display: flex;
  flex-direction: column;
  margin: 4px;
  background: #fff;
}
.form-head {
  padding-top: 2px;
  background: linear-gradient(#fff 0, #e2ecfb 164px, #fff 164px);
  border-bottom: 2px solid #b7cff0;
}
.title-row {
  display: flex;
  height: 56px;
  margin-bottom: 10px;
}
.title {
  flex: 1;
  display: flex;
  padding: 10px 16px 0 12px;
  background: linear-gradient(#fbfcff, #eef3fd);
}
h1 {
  flex: 1;
  margin: 0;
  padding-left: 14px;
  font: 700 29px/40px "Noto Sans", "Open Sans", sans-serif;
}
.menu-btn {
  height: 32px;
  padding-top: 4px;
}
.menu-btn svg {
  width: 16px;
  height: 8px;
}
.layout-btn {
  display: flex;
  align-items: center;
  justify-content: center;
  width: 44px;
  height: 44px;
  margin: 10px 14px 0 10px;
  background: #dfe2e8;
  border: 2px solid #bfc0c4;
}
.controls {
  display: flex;
  align-items: center;
  height: 56px;
  margin: 0 12px;
  padding: 12px 30px 0 14px;
  background: linear-gradient(#eff4fd, #e4ecf9);
  color: #262626;
  white-space: nowrap;
}
.focus-label {
  width: 92px;
}
.picker {
  position: relative;
  flex: none;
}
.picker.focus { width: 384px; }
.picker.aspect { width: 184px; }
.picker select {
  appearance: none;
  display: block;
  width: 100%;
  height: 32px;
  padding: 0 33px 0 12px;
  border: 0;
  border-radius: 8px;
  background: #fff;
  box-shadow: 0 1px 3px rgba(0, 0, 0, 0.35);
  color: inherit;
  font: inherit;
}
.picker svg {
  position: absolute;
  top: 4px;
  right: 4px;
  width: 24px;
  height: 24px;
  border-radius: 6px;
  background: linear-gradient(#4a94f8, #2f7af6);
  fill: none;
  stroke: #fff;
  stroke-width: 2.4;
  stroke-linecap: round;
  stroke-linejoin: round;
  pointer-events: none;
}
.aspect-label {
  width: 126px;
  padding-left: 22px;
}
.check {
  display: flex;
  align-items: center;
  gap: 8px;
}
.check input {
  appearance: none;
  flex: none;
  width: 24px;
  height: 24px;
  margin: 0;
  border: 1px solid #c6c8cc;
  border-radius: 5px;
  background: #fff;
}
.check.off {
  color: #aeb3bd;
}
.check.off input {
  border-color: #d8dbe2;
  background: #f1f4fa;
}
.check input:checked::after {
  content: "";
  display: block;
  width: 8px;
  height: 14px;
  margin: 2px 0 0 7px;
  border: solid #a9acb4;
  border-width: 0 3px 3px 0;
  transform: rotate(35deg);
}
.concurrent { width: 238px; margin-left: 20px; }
.contained { width: 160px; }
.same { width: 200px; }
.range-label { width: 158px; }
.set {
  width: 80px;
  height: 32px;
  border-radius: 8px;
  background: #fff;
  box-shadow: 0 1px 3px rgba(0, 0, 0, 0.35);
}
.range {
  margin: 0 12px 6px;
  padding-top: 22px;
  background: #fdfeff;
}
.range-bar {
  height: 14px;
  border: 2px solid #000;
  background: linear-gradient(#d8502a, #e87e30);
}
.facets {
  height: 160px;
  flex: none;
  margin: 10px 10px 12px;
  border: 2px solid #e5e5e5;
}
.facet {
  display: grid;
  grid-template-columns: 262px 200px 1fr;
  padding-left: 42px;
}
.facet-name {
  display: flex;
  align-items: center;
  gap: 4px;
}
.views {
  display: flex;
  height: 48px;
  flex: none;
  margin: 0 10px;
}
.view-tab {
  display: flex;
  align-items: center;
  gap: 8px;
}
.view-tab span {
  padding-top: 4px;
}
.list-tab {
  width: 94px;
  padding: 0 0 2px 10px;
  gap: 10px;
  border: solid #9f9f9f;
  border-width: 2px 2px 0 0;
  border-radius: 0 5px 0 0;
}
.list-icon {
  width: 26px;
  height: 22px;
  opacity: 0.8;
}
.chart-tab {
  width: 116px;
  padding-left: 8px;
  border: solid #9f9f9f;
  border-width: 0 2px 2px 0;
}
.views-rest {
  flex: 1;
  display: flex;
  justify-content: flex-end;
  padding: 8px 12px 0 0;
  border-bottom: 2px solid #9f9f9f;
}
.grid {
  flex: 1;
  min-height: 0;
  display: flex;
  flex-direction: column;
  margin: 14px 24px 24px;
  padding-right: 2px;
  border: 2px solid #e5e5e5;
}
.filter {
  display: block;
  width: 100%;
  height: 204px;
  flex: none;
  padding: 0 0 0 40px;
  border: 0;
  outline: 0;
  resize: none;
  background: #fff;
  font: inherit;
  line-height: 28px;
}
.filter::placeholder {
  color: #858585;
}
.rule {
  height: 6px;
  flex: none;
  background: #52ae32;
}
.table-clip {
  flex: 1;
  min-height: 0;
  overflow: hidden;
}
table {
  width: 100%;
  table-layout: fixed;
  border-collapse: separate;
  border-spacing: 0;
}
col.c {
  width: 300px;
}
th {
  height: 56px;
  padding: 2px 6px 0 4px;
  border-bottom: 2px solid #e4e4e4;
  background: linear-gradient(#e0e0e0, #e0e0e0) no-repeat right 12px / 2px 32px;
  font-weight: 400;
  text-align: left;
  white-space: nowrap;
}
td {
  height: 30px;
  padding: 0 4px 2px;
  border-right: 2px solid rgba(0, 0, 0, 0.1);
  line-height: 28px;
  white-space: nowrap;
}
.num {
  text-align: right;
}
td.fill {
  border-right: 0;
}
th.fill {
  background: none;
}
tbody tr:nth-child(even) {
  background: #f4f5f5;
}
tbody tr.picked {
  background: #dcdcdc;
  color: #262626;
}
.status {
  grid-column: 1 / -1;
  display: flex;
  padding: 12px 0 0 75.3%;
}
</style>
